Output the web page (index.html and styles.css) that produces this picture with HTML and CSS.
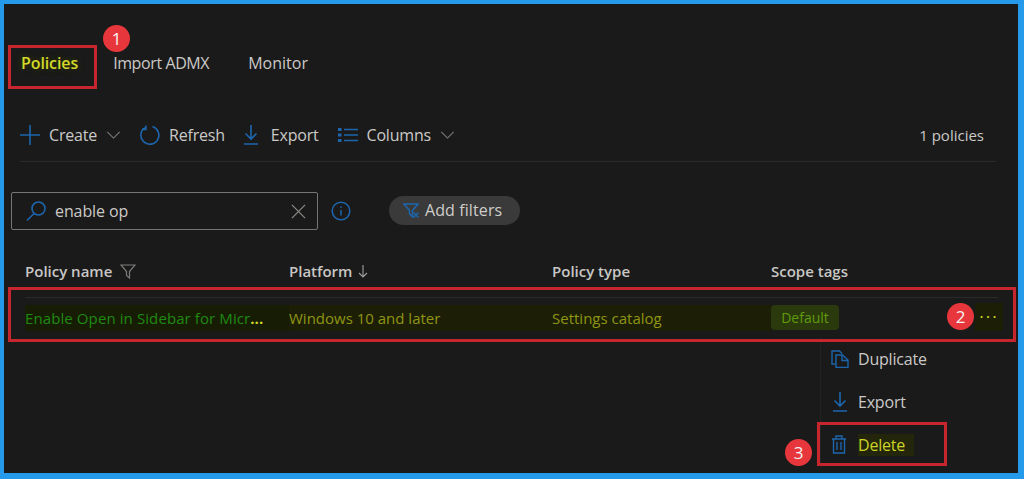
FILE: index.html
```html
<!DOCTYPE html>
<html lang="en">
<head>
<meta charset="utf-8">
<title>Policies</title>
<link rel="stylesheet" href="styles.css">
</head>
<body>
<div class="frame">
  <nav class="tabs">
    <span class="tab tab-active">Policies</span>
    <span class="tab">Import ADMX</span>
    <span class="tab">Monitor</span>
  </nav>
  <div class="toolbar">
    <span class="tool"><svg class="ic-plus" viewBox="0 0 20 20"><path d="M10 0v20M0 10h20"/></svg>Create<svg class="chev" viewBox="0 0 16 9"><path d="M1 1l7 7 7-7"/></svg></span>
    <span class="tool"><svg class="ic-refresh" viewBox="0 0 20 20"><path d="M12.500 1.600A9 9 0 1 1 5 2.600"/><path d="M5.900 .4v4h-4"/></svg>Refresh</span>
    <span class="tool"><svg class="ic-export" viewBox="0 0 14 20"><path d="M7 0v14M1.500 8.500 7 14l5.500-5.500M0 19h14"/></svg>Export</span>
    <span class="tool"><svg class="ic-cols" viewBox="0 0 20 14"><path d="M6 1.500h14M6 7h14M6 12.500h14"/><path class="sq" d="M0 0h3.500v3H0zM0 5.500h3.500v3H0zM0 11h3.500v3H0z"/></svg>Columns<svg class="chev" viewBox="0 0 16 9"><path d="M1 1l7 7 7-7"/></svg></span>
    <span class="count">1 policies</span>
  </div>
  <div class="filters">
    <div class="search">
      <svg class="ic-search" viewBox="0 0 20 20"><circle cx="12.500" cy="7.500" r="6.500"/><path d="M8 12.500 1 19.500"/></svg>
      <span class="search-text">enable op</span>
      <svg class="ic-x" viewBox="0 0 16 16"><path d="M1 1l14 14M15 1 1 15"/></svg>
    </div>
    <svg class="ic-info" viewBox="0 0 20 20"><circle cx="10" cy="10" r="8.800"/><path d="M10 9v5.500M10 5.500v1.500"/></svg>
    <span class="pill"><svg class="ic-funnel" viewBox="0 0 17 15"><path d="M1 1h14L9.500 7.500V14L6.500 11V7.500z"/><path d="M10.500 9.500l5 5M15.500 9.500l-5 5"/></svg>Add filters</span>
  </div>
  <div class="grid head">
    <span class="cell">Policy name<svg class="ic-filter" viewBox="0 0 16 15"><path d="M1 1h14L9.500 7.500V14L6.500 11.500V7.500z"/></svg></span>
    <span class="cell">Platform<svg class="ic-sort" viewBox="0 0 10 13"><path d="M5 0v12M1 8l4 4 4-4"/></svg></span>
    <span class="cell">Policy type</span>
    <span class="cell">Scope tags</span>
  </div>
  <div class="grid row">
    <span class="cell name"><span class="link">Enable Open in Sidebar for Micr</span><span class="ell">...</span></span>
    <span class="cell hl">Windows 10 and later</span>
    <span class="cell hl">Settings catalog</span>
    <span class="cell"><span class="tag">Default</span></span>
    <span class="more">···</span>
  </div>
  <ul class="menu">
    <li class="menu-item"><svg class="ic-dup" viewBox="0 0 18 18"><path d="M4.500 14H1V1h7.500l2.500 2.500"/><path d="M5 5h6.500L17 10v7.500H5z"/><path d="M11 5v5.500h6"/></svg>Duplicate</li>
    <li class="menu-item"><svg class="ic-export" viewBox="0 0 14 20"><path d="M7 0v14M1.500 8.500 7 14l5.500-5.500M0 19h14"/></svg>Export</li>
    <li class="menu-item menu-del"><svg class="ic-trash" viewBox="0 0 16 19"><path d="M1 4h14M5 4V1h6v3M2.500 4v14h11V4M6 7v8M10 7v8"/></svg><span class="del-text">Delete</span></li>
  </ul>

  <div class="mark mark-tab"></div>
  <div class="mark mark-row"></div>
  <div class="mark mark-del"></div>
  <span class="badge b1">1</span>
  <span class="badge b2">2</span>
  <span class="badge b3">3</span>
</div>
</body>
</html>
```

FILE: styles.css
```css
* { box-sizing: border-box; }
html, body { margin: 0; padding: 0; }
body { width: 1024px; height: 479px; overflow: hidden; background: #1a1a1a; font-family: "Open Sans", "Noto Sans", sans-serif; font-size: 16px; color: #cbc9c7; }
svg { fill: none; stroke: #1d66ad; stroke-width: 1.6; flex: none; display: block; }

.frame { position: relative; width: 1024px; height: 479px; background: #1a1a1a; border-style: solid; border-color: #2599ea; border-width: 4px 6px 6px 4px; }

.tabs { display: flex; height: 28px; margin-top: 45px; padding-left: 17px; align-items: center; font-weight: 500; }
.tab { letter-spacing: -.4px; margin-right: 39px; }
.tab:nth-child(3) { letter-spacing: 0; }
.tab-active { color: #d3d92a; font-weight: 600; letter-spacing: -.1px; margin-right: 35px; text-shadow: 0 0 6px #3a3d00; }

.toolbar { display: flex; align-items: center; height: 56px; margin: 29px 22px 0 16px; padding: 2px 0 0; border-bottom: 1px solid #2b2b2b; }
.tool { display: flex; align-items: center; letter-spacing: -.2px; margin-right: 19px; font-weight: 500; }
.count { margin-left: auto; font-size: 15px; margin-right: 12px; }
.ic-plus { width: 20px; height: 20px; margin-right: 9px; }
.ic-refresh { width: 20px; height: 20px; margin-right: 9px; }
.ic-export { width: 14px; height: 20px; margin-right: 13px; }
.ic-cols { width: 20px; height: 14px; margin-right: 9px; }
.ic-cols .sq { fill: #1d66ad; stroke: none; }
.chev { width: 15px; height: 8px; margin-left: 9px; stroke: #7d7b79; stroke-width: 1.2; }

.filters { display: flex; align-items: center; height: 38px; margin-top: 30px; margin-left: 7px; }
.search { display: flex; align-items: center; width: 307px; height: 38px; border: 1.5px solid #77757a; border-radius: 2px; padding: 0 11px 0 14px; }
.ic-search { width: 20px; height: 20px; margin-right: 9px; }
.search-text { flex: 1; font-weight: 500; letter-spacing: -.1px; }
.ic-x { width: 15px; height: 15px; stroke: #8d8b89; stroke-width: 1.3; }
.ic-info { width: 20px; height: 20px; margin-left: 13px; stroke-width: 1.5; }
.pill { display: flex; align-items: center; height: 29px; width: 131px; margin: -2px 0 0 38px; padding-left: 14px; border-radius: 15px; background: #3a3a3a; font-weight: 500; letter-spacing: .1px; color: #cfcdcb; }
.ic-funnel { width: 17px; height: 15px; margin-right: 5px; stroke-width: 1.500; }

.grid { display: grid; grid-template-columns: 264px 263px 219px 1fr; margin-left: 21px; align-items: center; position: relative; font-size: 15px; }
.head { height: 32px; margin-top: 26px; padding-bottom: 2px; font-weight: 600; letter-spacing: 0; color: #c9c7c5; }
.head .cell { display: flex; align-items: center; }
.ic-filter { width: 16px; height: 15px; margin-left: 8px; stroke: #7d7b79; stroke-width: 1.2; }
.ic-sort { width: 10px; height: 13px; margin-left: 6px; stroke: #a09e9c; stroke-width: 1.1; }
.row { height: 42px; margin-top: 9px; margin-right: 20px; padding-bottom: 2px; border-top: 1px solid #2a2a2a; }
.row .cell { white-space: nowrap; }
.name { display: flex; background: #171c05; line-height: 26px; }
.link { color: #1f8a12; font-weight: 500; letter-spacing: .1px; }
.ell { color: #d3d92a; font-weight: 700; }
.hl { color: #8f9514; background: #1c1f06; line-height: 26px; }
.tag { display: inline-block; width: 68px; height: 25px; line-height: 25px; text-align: center; background: #2b3a0c; color: #5f9a0c; border-radius: 4px; font-size: 14px; font-weight: 500; }
.more { position: absolute; left: 950px; top: 5px; width: 28px; text-align: center; background: #1c1f06; color: #d3d92a; font-size: 17px; font-weight: 500; line-height: 28px; letter-spacing: 2px; }

.menu { list-style: none; margin: -2px 0 0 816px; padding: 0; width: 132px; border-left: 1px solid #222; }
.menu-item { display: flex; align-items: center; height: 43px; padding-left: 10px; font-weight: 500; letter-spacing: -.2px; white-space: nowrap; }
.menu-item svg { margin-right: 9px; }
.ic-dup { width: 18px; height: 18px; stroke-width: 1.4; }
.menu-item .ic-export { width: 14px; height: 20px; margin-left: 2px; margin-right: 11px; }
.menu-del .ic-trash { width: 16px; height: 19px; margin-right: 11px; stroke-width: 1.4; }
.del-text { color: #cdd326; background: #23260a; padding: 0 9px 0 0; }

.mark { position: absolute; border: 3px solid #c7262e; }
.mark-tab { left: 4px; top: 41px; width: 89px; height: 44px; }
.mark-row { left: 4px; top: 283px; width: 1008px; height: 55px; }
.mark-del { left: 813px; top: 418px; width: 130px; height: 44px; }
.badge { position: absolute; width: 27px; height: 27px; line-height: 27px; border-radius: 50%; background: #e8373c; color: #f4f4f4; font-size: 17px; text-align: center; }
.b1 { left: 99px; top: 21px; }
.b2 { left: 943px; top: 299px; }
.b3 { left: 781px; top: 435px; }
```
